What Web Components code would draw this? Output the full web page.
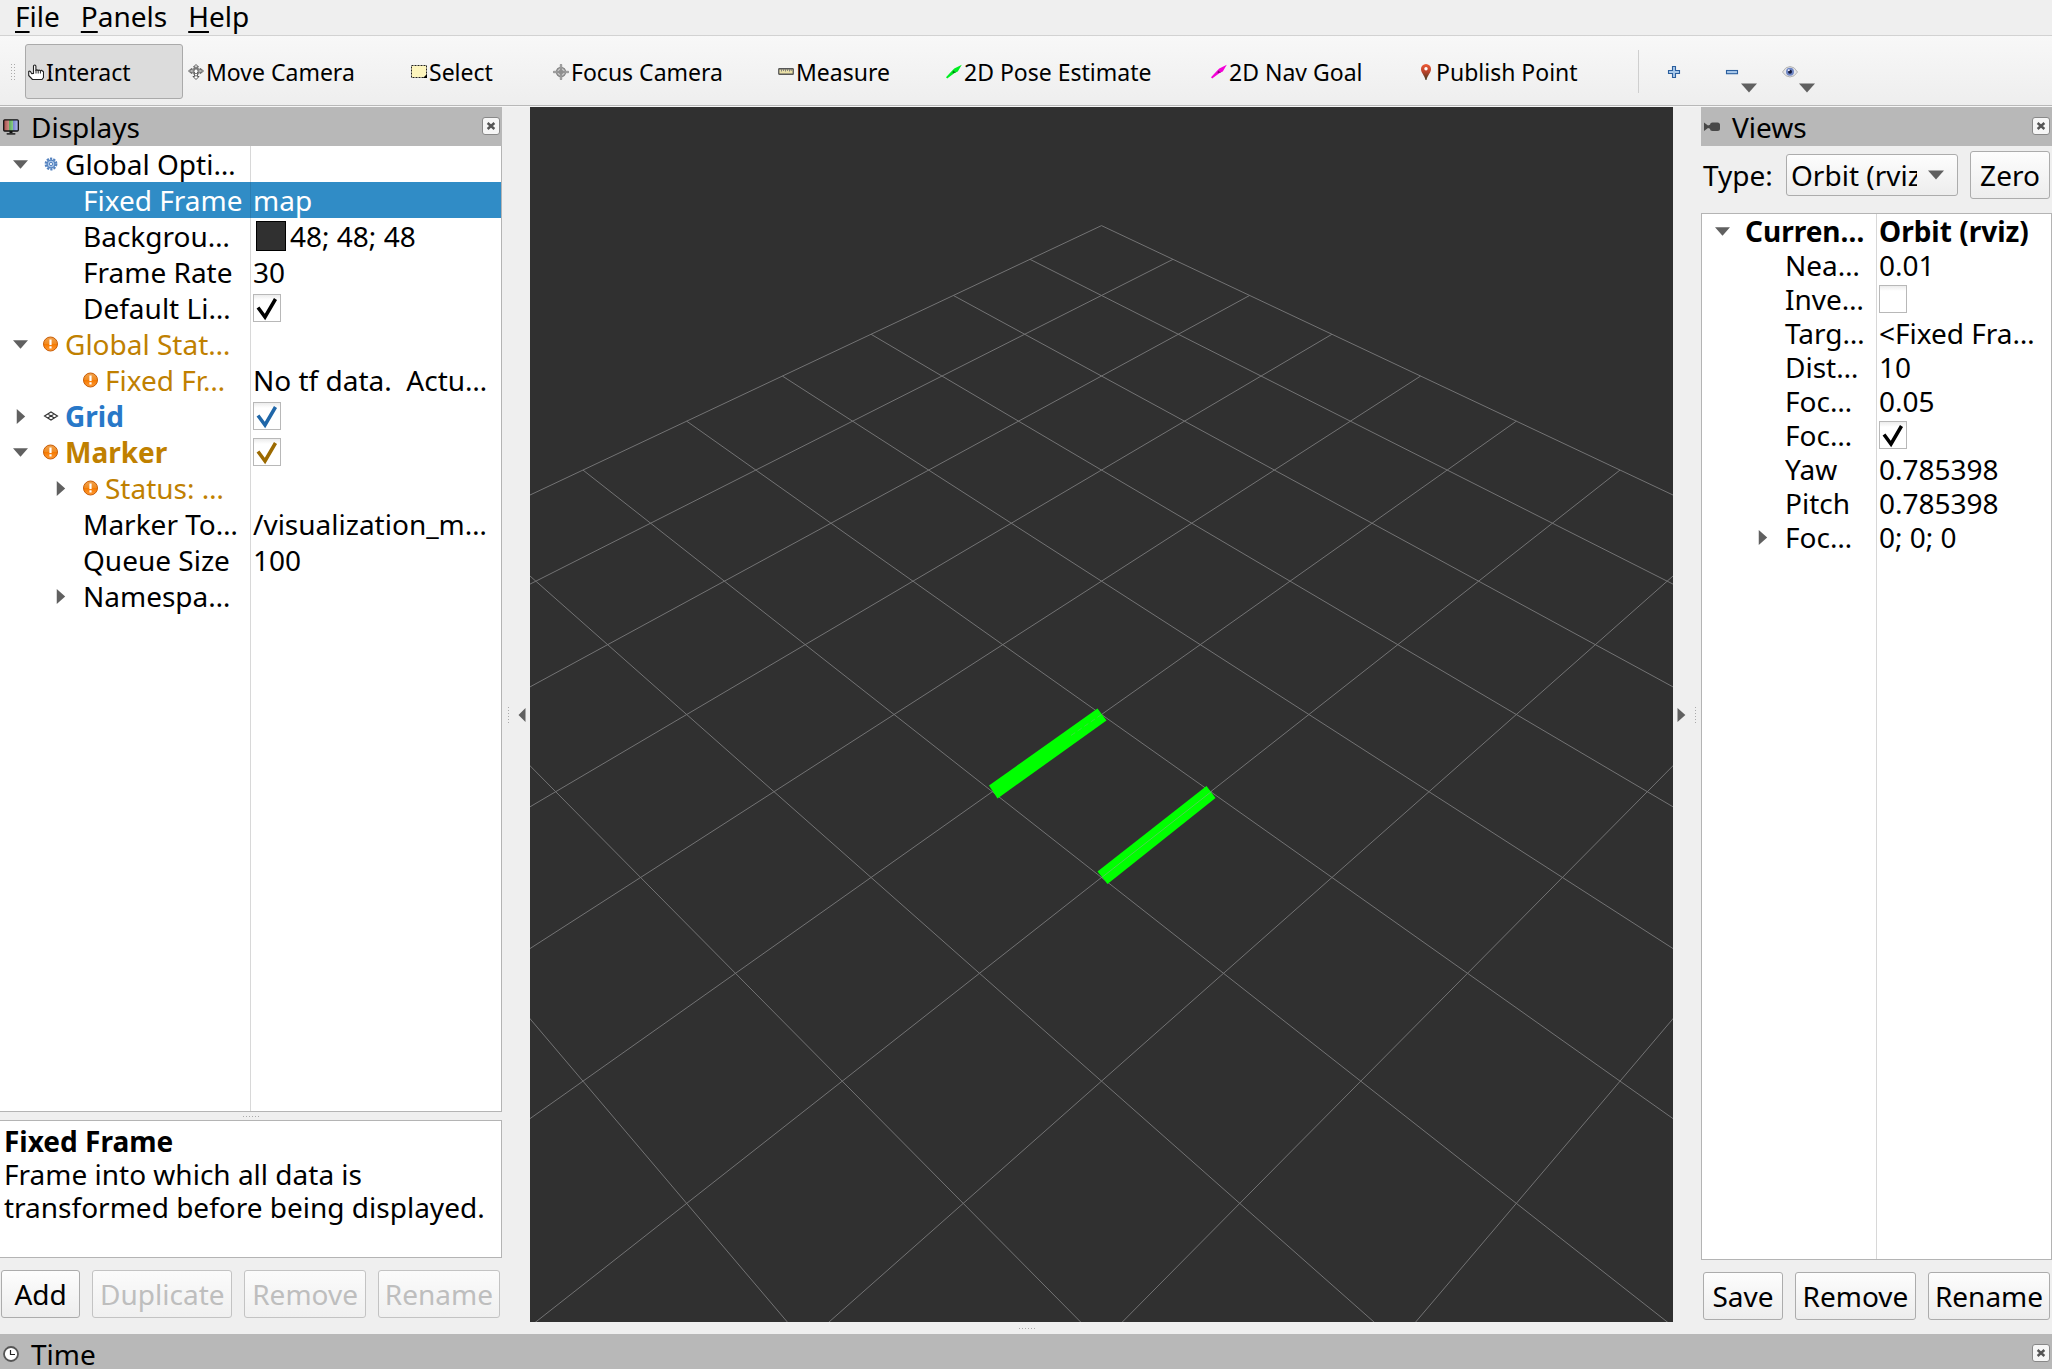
<!DOCTYPE html>
<html lang="en">
<head>
<meta charset="utf-8">
<title>RViz</title>
<style>
  html, body { margin: 0; height: 100%; overflow: hidden; }
  body { background: #efefef; color: #000; font: 28px/33px "Noto Sans", "Open Sans", sans-serif; }
</style>
</head>
<body>
<rviz-app></rviz-app>

<script>
const shadow = (el, html) => { el.attachShadow({ mode: 'open' }).innerHTML = html; return el.shadowRoot; };

/* ---------- icons ---------- */
const ICONS = {
  hand: `<path d="M5.5 9.5V2.2a1.2 1.2 0 0 1 2.4 0V6.500q1-1.200 2.200 0q1.100-1 2.200.2q1.300-.900 2.200.4q.9 0 1 .9v5.500l-1.500 2H4.500L.7 11.500V7.500q.8-.8 1.900.2L3.600 9.600z" fill="#fff" stroke="#222" stroke-width="1.100" stroke-linejoin="round"/><path d="M8 6v3.500M10.200 6.500v3M12.400 7v2.500" stroke="#222" fill="none"/>`,
  move: `<g fill="#fff" stroke="#555" stroke-width="1"><path d="M8 .5l2.500 2.500H9V6h3.500V4.500L15.500 7l-3 2.500V8H9.500v4.500H11L8 15.500 5 12.500h1.500V8H3.500v1.500L.5 7l3-2.500V6H7V3H5.500z"/></g><ellipse cx="8" cy="7" rx="5.500" ry="2.500" fill="none" stroke="#777"/><ellipse cx="8" cy="7.500" rx="2.300" ry="4.500" fill="none" stroke="#777"/>`,
  select: `<rect x=".5" y="1.500" width="15" height="12" fill="#fdf5bd" stroke="#222" stroke-dasharray="2 1"/><path d="M16 10v4h-4z" fill="#000"/>`,
  focus: `<g fill="none" stroke="#8a8a8a"><circle cx="8" cy="8" r="4.500" stroke-width="1.500"/><path d="M7.300.5h1.400v15H7.300zM.5 7.300h15v1.400H.5z" fill="#f4f4f4"/><circle cx="8" cy="8" r="2"/><path d="M4 5h8M4 11h8M5 4v8M11 4v8" stroke-width=".6"/></g>`,
  measure: `<rect x=".75" y="4.750" width="14.500" height="5.500" rx=".6" fill="#e9dfa6" stroke="#565656" stroke-width="1.300"/><path d="M3.500 5v2.500M5.500 5v2M7.500 5v2.500M9.500 5v2M11.500 5v2.500M13.200 5v2" stroke="#777" stroke-width=".9"/>`,
  pose: `<path d="M0 13.200L6.500 6.300 8.300 4.600 15.800.8 11.800 7.500 8.600 9 1.200 14.500z" fill="#00ee22"/><path d="M7 6.500l3 2-3.500.800z" fill="#067a16"/>`,
  nav: `<path d="M0 13.200L6.500 6.300 8.300 4.600 15.800.8 11.800 7.500 8.600 9 1.200 14.500z" fill="#f400d8"/><path d="M7 6.500l3 2-3.500.800z" fill="#8a0a7c"/>`,
  pin: `<defs><linearGradient id="g" x2="0" y2="1"><stop offset="0" stop-color="#ee5a36"/><stop offset=".5" stop-color="#b9432a"/><stop offset="1" stop-color="#3c3a1e"/></linearGradient></defs><path d="M8 0a5 5 0 0 1 5 5.200C13 8.800 9.500 11 8.500 16h-1C6.500 11 3 8.800 3 5.200A5 5 0 0 1 8 0z" fill="url(#g)"/><circle cx="8" cy="4.800" r="1.700" fill="#fff"/>`,
  plus: `<path d="M6.500 2.500h3v4h4v3h-4v4h-3v-4h-4v-3h4z" fill="#a9c9ea" stroke="#2b5f9e" stroke-width="1.100"/>`,
  minus: `<rect x="2.500" y="6.500" width="11" height="3.200" fill="#a9c9ea" stroke="#2b5f9e" stroke-width="1.100"/>`,
  eye: `<path d="M.5 8Q3.500 2.500 8 2.500T15.500 8Q12.500 13 8 13T.5 8z" fill="#e6e6e8" stroke="#b4b4b4"/><circle cx="8" cy="7.800" r="4" fill="#6f86c4"/><circle cx="8" cy="7.800" r="2" fill="#141a3c"/><circle cx="6.800" cy="6.300" r="1" fill="#e8ecff"/>`,
  monitor: `<defs><linearGradient id="g"><stop offset="0" stop-color="#a34848"/><stop offset=".33" stop-color="#c98a80"/><stop offset=".34" stop-color="#5aa35a"/><stop offset=".66" stop-color="#8fd08a"/><stop offset=".67" stop-color="#7a86d0"/><stop offset="1" stop-color="#b9bff0"/></linearGradient></defs><rect x=".7" y=".8" width="14.600" height="11.200" rx="1" fill="url(#g)" stroke="#111" stroke-width="1.300"/><path d="M6.500 12h3v2h-3z" fill="#111"/><rect x="3.500" y="14" width="9" height="1.700" rx=".8" fill="#333"/>`,
  camera: `<rect x="6" y="3.500" width="10" height="8.500" rx="2.500" fill="#484848"/><path d="M0 3.500l4 3 2-.8v4l-2-.8-4 3z" fill="#484848"/>`,
  clock: `<circle cx="8" cy="8" r="7" fill="#fff" stroke="#555" stroke-width="1.800"/><path d="M7.500 4v4.500H12" fill="none" stroke="#222" stroke-width="1.200"/>`,
  gear: `<g fill="none" stroke="#5482bf"><circle cx="8" cy="8" r="5.300" stroke-width="2.200" stroke-dasharray="2.200 1.130"/><circle cx="8" cy="8" r="3.900" fill="#a9c5e8" stroke-width="1.300"/><circle cx="8" cy="8" r="1.600" fill="#fff" stroke-width="1"/></g>`,
  warn: `<defs><linearGradient id="g" x2="0" y2="1"><stop offset="0" stop-color="#f0a24e"/><stop offset=".5" stop-color="#f28a1e"/><stop offset=".51" stop-color="#f57900"/><stop offset="1" stop-color="#ff9a35"/></linearGradient></defs><circle cx="7.500" cy="8" r="7" fill="url(#g)" stroke="#c85e08" stroke-width="1"/><path d="M6.400 3.500h2.200V9H6.400zM6.400 10.200h2.200v2.200H6.400z" fill="#fff"/>`,
  grid: `<path d="M1.500 8l6.500-4 6.500 4L8 12zM4.700 6l6.600 4M4.700 10l6.600-4" fill="none" stroke="#333" stroke-width="1.100"/>`,
  close: `<path d="M3.500 4L12.500 12M12.500 4L3.500 12" stroke="#555" stroke-width="3.200"/><path d="M7 3.500h2M7 12.500h2" stroke="#fff"/>`,
  down: `<path d="M0 3.500h16L8 12.500z" fill="#606060"/>`,
  right: `<path d="M4 0v16l9-8z" fill="#606060"/>`,
  left: `<path d="M12 0v16L4 8z" fill="#606060"/>`
};

customElements.define('rviz-icon', class extends HTMLElement {
  constructor() {
    super();
    shadow(this, `<style>:host{display:block;flex:none;width:16px;height:16px}svg{display:block;width:100%;height:100%}</style>
      <svg viewBox="0 0 16 16" aria-hidden="true">${ICONS[this.getAttribute('name')] || ''}</svg>`);
  }
});

/* dotted drag handle of a splitter or a tool bar */
customElements.define('rviz-grip', class extends HTMLElement {
  constructor() {
    super();
    shadow(this, `<style>:host{display:block;flex:none;width:var(--w,16px);height:var(--h,1px);
      background:linear-gradient(90deg,#aaa 1px,transparent 1px) 0 0/3px 100%;
      mask-image:repeating-linear-gradient(#000 0 1px,transparent 1px 3px)}</style>`);
  }
});

/* ---------- buttons ---------- */
customElements.define('rviz-button', class extends HTMLElement {
  constructor() {
    super();
    shadow(this, `<style>:host{display:block}
      button{display:block;box-sizing:border-box;width:100%;height:48px;margin:0;padding:0;border:1px solid #acacac;border-radius:3px;
        background:linear-gradient(#fdfdfd,#ededed);font:inherit;line-height:46px;color:#000;white-space:nowrap}
      button:disabled{color:#bebebe;border-color:#c3c3c3;background:linear-gradient(#fbfbfb,#f0f0f0)}</style>
      <button type="button" ${this.hasAttribute('disabled') ? 'disabled' : ''}><slot></slot></button>`);
  }
});

customElements.define('rviz-tool', class extends HTMLElement {
  constructor() {
    super();
    shadow(this, `<style>:host{display:block}
      button{box-sizing:border-box;width:100%;height:55px;display:flex;align-items:center;gap:2px;margin:0;padding:0 0 0 2px;
        border:1px solid transparent;border-radius:3px;background:none;font:inherit;line-height:35px;color:#000;text-align:left;white-space:nowrap}
      span{padding-top:2px}
      :host([active]) button{background:#dcdcdc;border-color:#aaa}</style>
      <button type="button"><rviz-icon name="${this.getAttribute('icon')}"></rviz-icon><span><slot></slot></span></button>`);
  }
});

customElements.define('rviz-tool-action', class extends HTMLElement {
  constructor() {
    super();
    shadow(this, `<style>:host{display:block;width:58px}
      button{box-sizing:border-box;width:100%;height:55px;display:grid;grid-template:1fr/1fr;margin:0;padding:0;border:0;background:none}
      rviz-icon{grid-area:1/1;place-self:center}
      .menu{place-self:end;margin:0 4px 3px 0}</style>
      <button type="button" aria-label="${this.getAttribute('label')}"><rviz-icon name="${this.getAttribute('icon')}"></rviz-icon>
      ${this.hasAttribute('menu') ? '<rviz-icon class="menu" name="down"></rviz-icon>' : ''}</button>`);
  }
});

/* ---------- menu and tool bars ---------- */
customElements.define('rviz-menu-bar', class extends HTMLElement {
  constructor() {
    super();
    shadow(this, `<style>:host{display:flex;gap:21px;height:35px;padding-left:15px;border-bottom:1px solid #d2d2d2;background:#efefef}
      button{height:33px;margin:0;padding:0;border:0;background:none;font:inherit;line-height:33px;color:#000}
      u{text-decoration-thickness:2px;text-underline-offset:4px;text-decoration-skip-ink:none}</style>
      <button type="button"><u>F</u>ile</button><button type="button"><u>P</u>anels</button><button type="button"><u>H</u>elp</button>`);
  }
});

customElements.define('rviz-tool-bar', class extends HTMLElement {
  constructor() {
    super();
    shadow(this, `<style>:host{display:flex;align-items:flex-start;box-sizing:border-box;height:71px;padding-top:8px;
        background:linear-gradient(#f8f8f8,#eee) 0 0/100% 69px no-repeat,#f6f6f6;font-size:23px;
        box-shadow:inset 0 -1px #f6f6f6,inset 0 -2px #b8b8b8}
      .grip{width:25px;height:55px;display:flex;align-items:center;justify-content:center}
      .tools{display:grid;grid-template-columns:158px 221px 140px 223px 166px 263px 205px 221px;gap:2px}
      .line{width:1px;height:43px;margin:6px 6px 0 2px;background:#cfcfcf}</style>
      <div class="grip"><rviz-grip style="--w:4px;--h:16px"></rviz-grip></div>
      <div class="tools">
        <rviz-tool icon="hand" active>Interact</rviz-tool>
        <rviz-tool icon="move">Move Camera</rviz-tool>
        <rviz-tool icon="select">Select</rviz-tool>
        <rviz-tool icon="focus">Focus Camera</rviz-tool>
        <rviz-tool icon="measure">Measure</rviz-tool>
        <rviz-tool icon="pose">2D Pose Estimate</rviz-tool>
        <rviz-tool icon="nav">2D Nav Goal</rviz-tool>
        <rviz-tool icon="pin">Publish Point</rviz-tool>
      </div>
      <div class="line"></div>
      <rviz-tool-action icon="plus" label="Add tool"></rviz-tool-action>
      <rviz-tool-action icon="minus" label="Remove tool" menu></rviz-tool-action>
      <rviz-tool-action icon="eye" label="Tool bar style" menu></rviz-tool-action>`);
  }
});

/* ---------- dock with a title bar ---------- */
customElements.define('rviz-dock', class extends HTMLElement {
  constructor() {
    super();
    shadow(this, `<style>:host{display:flex;flex-direction:column;min-height:0}
      header{flex:none;display:flex;align-items:center;gap:12px;height:39px;padding:0 2px 0 3px;background:#b8b8b8}
      h2{flex:1;margin:0;font:inherit;line-height:38px}
      button{box-sizing:border-box;width:18px;height:18px;margin:0 0 2px;padding:1px;border:1px solid #888;border-radius:3px;background:#f6f6f6;display:grid;place-items:center}
      button rviz-icon{width:12px;height:12px}</style>
      <header><rviz-icon name="${this.getAttribute('icon')}"></rviz-icon><h2>${this.getAttribute('heading')}</h2>
      <button type="button" aria-label="Close"><rviz-icon name="close"></rviz-icon></button></header><slot></slot>`);
  }
});

/* ---------- property tree ---------- */
customElements.define('rviz-tree', class extends HTMLElement {
  constructor() {
    super();
    shadow(this, `<style>:host{display:flex;flex-direction:column;background:#fff;border:1px solid #b4b4b4}
      .rest{flex:1;margin-left:var(--name);border-left:1px solid #d8d8d8}</style><slot></slot><div class="rest"></div>`);
  }
});

customElements.define('rviz-row', class extends HTMLElement {
  constructor() {
    super();
    const a = n => this.getAttribute(n), has = n => this.hasAttribute(n);
    const depth = Number(a('depth') || 0);
    shadow(this, `<style>:host{display:flex;height:var(--row);line-height:var(--row);white-space:nowrap;--ink:#000}
      :host([tone=warn]){--ink:#c08000;--tick:#9c6a00}
      :host([tone=on]){--ink:#2878c8;--tick:#1f66a8}
      :host([bold]){font-weight:bold}
      :host([selected]){background:#308cc6;color:#fff;--ink:#fff}
      .name{box-sizing:border-box;flex:none;width:var(--name);padding-left:${depth * 40}px;display:flex;align-items:center;color:var(--ink)}
      .toggle{flex:none;width:40px;height:100%;margin:0 3px 0 0;padding:0;border:0;background:none;display:grid;place-items:center}
      .toggle rviz-icon{width:15px;height:15px}
      .icon{margin-right:6px}
      .value{flex:1;min-width:0;box-sizing:border-box;border-left:1px solid #d8d8d8;padding-left:2px;display:flex;align-items:center;white-space:pre}
      :host([selected]) .value{border-color:#2b7db1}
      .check{display:grid;width:28px;height:28px}
      .check>*{grid-area:1/1}
      input{appearance:none;box-sizing:border-box;width:28px;height:28px;margin:0;border:1px solid #b8b8b8;background:linear-gradient(#ececec,#fff 5px)}
      .check svg{pointer-events:none;fill:none;stroke:var(--tick,#000);stroke-width:3.500}
      i{box-sizing:border-box;width:30px;height:30px;margin:0 4px 0 3px;border:1px solid #000;background:#303030}</style>
      <div class="name">${has('open') || has('closed')
        ? `<button class="toggle" type="button" aria-label="Toggle ${a('name')}"><rviz-icon name="${has('open') ? 'down' : 'right'}"></rviz-icon></button>`
        : '<span class="toggle"></span>'}${a('icon') ? `<rviz-icon class="icon" name="${a('icon')}"></rviz-icon>` : ''}<label for="v">${a('name')}</label></div>
      <div class="value">${has('check')
        ? `<span class="check"><input id="v" type="checkbox" ${a('check') === 'on' ? 'checked' : ''}>${a('check') === 'on' ? '<svg viewBox="0 0 28 28"><path d="M5 13.500L12 23 22.500 5"/></svg>' : ''}</span>`
        : `${has('swatch') ? '<i></i>' : ''}<output id="v"></output>`}</div>`);
    const out = this.shadowRoot.querySelector('output');
    if (out) out.textContent = a('value') || '';
  }
});

/* ---------- docks ---------- */
customElements.define('rviz-displays', class extends HTMLElement {
  constructor() {
    super();
    shadow(this, `<style>:host{display:flex}
      rviz-dock{flex:1;min-width:0}
      rviz-tree{flex:1;min-height:0;border-width:0 1px 1px 0;--row:36px;--name:250px}
      .split{height:8px;display:flex;align-items:center;justify-content:center}
      .help{box-sizing:border-box;height:138px;padding:4px;border:1px solid #b4b4b4;border-left:0;background:#fff}
      .help p{margin:0}
      .buttons{display:grid;grid-template-columns:79fr 140fr 121fr 122fr;gap:12px;padding:12px 2px 16px 1px}</style>
      <rviz-dock icon="monitor" heading="Displays">
        <rviz-tree>
          <rviz-row open icon="gear" name="Global Opti…"></rviz-row>
          <rviz-row selected depth="1" name="Fixed Frame" value="map"></rviz-row>
          <rviz-row depth="1" name="Backgrou…" swatch value="48; 48; 48"></rviz-row>
          <rviz-row depth="1" name="Frame Rate" value="30"></rviz-row>
          <rviz-row depth="1" name="Default Li…" check="on"></rviz-row>
          <rviz-row open icon="warn" tone="warn" name="Global Stat…"></rviz-row>
          <rviz-row depth="1" icon="warn" tone="warn" name="Fixed Fr…" value="No tf data.  Actu…"></rviz-row>
          <rviz-row closed bold icon="grid" tone="on" name="Grid" check="on"></rviz-row>
          <rviz-row open bold icon="warn" tone="warn" name="Marker" check="on"></rviz-row>
          <rviz-row depth="1" closed icon="warn" tone="warn" name="Status: …"></rviz-row>
          <rviz-row depth="1" name="Marker To…" value="/visualization_m…"></rviz-row>
          <rviz-row depth="1" name="Queue Size" value="100"></rviz-row>
          <rviz-row depth="1" closed name="Namespa…"></rviz-row>
        </rviz-tree>
        <div class="split"><rviz-grip></rviz-grip></div>
        <div class="help"><p><b>Fixed Frame</b><br>Frame into which all data is transformed before being displayed.</p></div>
        <div class="buttons">
          <rviz-button>Add</rviz-button><rviz-button disabled>Duplicate</rviz-button>
          <rviz-button disabled>Remove</rviz-button><rviz-button disabled>Rename</rviz-button>
        </div>
      </rviz-dock>`);
  }
});

customElements.define('rviz-views', class extends HTMLElement {
  constructor() {
    super();
    shadow(this, `<style>:host{display:flex}
      rviz-dock{flex:1;min-width:0}
      .type{display:flex;align-items:center;padding:5px 2px 14px}
      .type label{width:83px}
      .pick{flex:1;display:grid;align-items:center;margin-right:12px}
      .pick>*{grid-area:1/1}
      .pick rviz-icon{justify-self:end;margin-right:14px;pointer-events:none}
      select{appearance:none;box-sizing:border-box;width:100%;height:42px;margin:0;padding:0 40px 0 4px;border:1px solid #acacac;border-radius:3px;
        background:linear-gradient(#fdfdfd,#ededed);font:inherit;color:#000;text-overflow:clip}
      .type rviz-button{width:80px}
      rviz-tree{flex:1;min-height:0;--row:34px;--name:174px}
      .buttons{display:grid;grid-template-columns:80fr 121fr 122fr;gap:12px;padding:12px 2px 14px}</style>
      <rviz-dock icon="camera" heading="Views">
        <div class="type"><label for="t">Type:</label>
          <div class="pick"><select id="t"><option>Orbit (rviz)</option></select><rviz-icon name="down"></rviz-icon></div>
          <rviz-button>Zero</rviz-button></div>
        <rviz-tree>
          <rviz-row open bold name="Curren…" value="Orbit (rviz)"></rviz-row>
          <rviz-row depth="1" name="Nea…" value="0.01"></rviz-row>
          <rviz-row depth="1" name="Inve…" check="off"></rviz-row>
          <rviz-row depth="1" name="Targ…" value="&lt;Fixed Fra…"></rviz-row>
          <rviz-row depth="1" name="Dist…" value="10"></rviz-row>
          <rviz-row depth="1" name="Foc…" value="0.05"></rviz-row>
          <rviz-row depth="1" name="Foc…" check="on"></rviz-row>
          <rviz-row depth="1" name="Yaw" value="0.785398"></rviz-row>
          <rviz-row depth="1" name="Pitch" value="0.785398"></rviz-row>
          <rviz-row depth="1" closed name="Foc…" value="0; 0; 0"></rviz-row>
        </rviz-tree>
        <div class="buttons"><rviz-button>Save</rviz-button><rviz-button>Remove</rviz-button><rviz-button>Rename</rviz-button></div>
      </rviz-dock>`);
  }
});

/* ---------- 3D view: a 10x10 ground grid seen by an orbit camera, 10 m away, yaw and pitch 45 degrees ---------- */
customElements.define('rviz-scene', class extends HTMLElement {
  constructor() {
    super();
    const F = 607.5 / Math.tan(Math.PI / 8), S = Math.SQRT1_2;
    const project = (x, y) => {
      const side = (x - y) * S, away = (x + y) * S, depth = 10 + away * S;
      return [F * side / depth, -F * away * S / depth].map(v => v.toFixed(2)).join(' ');
    };
    let d = '';
    for (let i = -5; i <= 5; i++) d += `M${project(i, -5)}L${project(i, 5)}M${project(-5, i)}L${project(5, i)}`;
    shadow(this, `<style>:host{display:block;background:#303030;overflow:hidden}svg{display:block;width:100%;height:100%}</style>
      <svg viewBox="-571.5 -607.5 1143 1215" preserveAspectRatio="xMidYMid slice" role="img" aria-label="3D view">
        <path d="${d}" fill="none" stroke="#737374" stroke-width="1"/>
        <g fill="#0f0"><path d="M-4 -6L5 6 -104 84 -112.500 71z"/><path d="M105 71.500L114 83.500 6 169.500 -4 157z"/></g>
        <path d="M0 163.200L110 77" stroke="#a0a0a4" stroke-opacity=".5"/>
        <path d="M0 0L-32 22" stroke="#a0a0a4" stroke-opacity=".35" stroke-dasharray="5 3"/>
      </svg>`);
  }
});

/* ---------- window ---------- */
customElements.define('rviz-app', class extends HTMLElement {
  constructor() {
    super();
    shadow(this, `<style>:host{display:flex;flex-direction:column;height:100vh;overflow:hidden;background:#efefef}
      main{flex:1;min-height:0;display:flex}
      rviz-displays{flex:none;width:502px}
      rviz-views{flex:none;width:351px}
      .mid{flex:1;min-width:0;display:flex;flex-direction:column}
      rviz-scene{flex:1;min-height:0}
      .side{flex:none;width:28px;display:flex;align-items:center;justify-content:space-between;box-sizing:border-box;padding:0 1px 12px 6px}
      .side.r{flex-direction:row-reverse;padding:0 5px 12px 1px}
      .side button{margin:0;padding:0;border:0;background:none}
      .side rviz-icon{width:14px;height:14px}
      .bottom{height:12px;display:flex;align-items:center;justify-content:center}
      .mid .bottom{padding-right:150px}
      .time{flex:none;height:35px}</style>
      <rviz-menu-bar></rviz-menu-bar>
      <rviz-tool-bar></rviz-tool-bar>
      <main>
        <rviz-displays></rviz-displays>
        <div class="side"><rviz-grip style="--w:1px;--h:16px"></rviz-grip><button type="button" aria-label="Hide left docks"><rviz-icon name="left"></rviz-icon></button></div>
        <div class="mid"><rviz-scene></rviz-scene><div class="bottom"><rviz-grip></rviz-grip></div></div>
        <div class="side r"><rviz-grip style="--w:1px;--h:16px"></rviz-grip><button type="button" aria-label="Hide right docks"><rviz-icon name="right"></rviz-icon></button></div>
        <rviz-views></rviz-views>
      </main>
      <div class="time"><rviz-dock icon="clock" heading="Time"></rviz-dock></div>`);
  }
});
</script>
</body>
</html>
